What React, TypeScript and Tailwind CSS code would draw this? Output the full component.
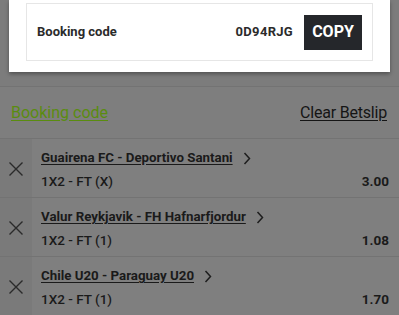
import React from "react";

const rows = [
  { match: "Guairena FC - Deportivo Santani", market: "1X2 - FT (X)", odds: "3.00" },
  { match: "Valur Reykjavik - FH Hafnarfjordur", market: "1X2 - FT (1)", odds: "1.08" },
  { match: "Chile U20 - Paraguay U20", market: "1X2 - FT (1)", odds: "1.70" },
];

function XIcon() {
  return (
    <svg width="16" height="16" viewBox="0 0 16 16" fill="none" stroke="#2a2a2a" strokeWidth="1.4">
      <path d="M1.5 1.5 L14.5 14.5 M14.5 1.5 L1.5 14.5" />
    </svg>
  );
}

function Chevron() {
  return (
    <svg width="8" height="13" viewBox="0 0 8 13" fill="none" stroke="#1e1e1e" strokeWidth="1.5">
      <path d="M1.5 1 L6.5 6.5 L1.5 12" />
    </svg>
  );
}

export default function App() {
  return (
    <div
      className="w-[399px] h-[315px] overflow-hidden bg-[#7c7c7c] flex flex-col"
      style={{ fontFamily: "Roboto, 'Liberation Sans', sans-serif" }}
    >
      <div className="mx-[9px] bg-white pt-[3px] pb-[11px] px-[17px] shadow-[0_2px_4px_rgba(0,0,0,0.35)]">
        <div className="h-[58px] border border-[#e6e6e6] flex items-center pl-[10px] pr-[10px]">
          <span className="text-[13px] font-bold text-[#2b2b2b]">Booking code</span>
          <span className="ml-auto text-[13px] font-bold text-[#2b2b2b] tracking-[0.3px]">0D94RJG</span>
          <button className="ml-[11px] w-[58px] h-[35px] bg-[#25272b] text-white text-[16px] font-bold flex items-center justify-center">
            COPY
          </button>
        </div>
      </div>
      <div className="mt-[14px] border-t border-[#737373] h-[54px] flex items-center justify-between pl-[11px] pr-[12px] bg-[#7e7e7e]">
        <span className="text-[16px] text-[#5a8c10] underline underline-offset-[2px]">Booking code</span>
        <span className="text-[16px] text-[#151515] underline underline-offset-[2px] tracking-[-0.2px]">Clear Betslip</span>
      </div>
      {rows.map((r) => (
        <div key={r.match} className="h-[59px] shrink-0 flex border-t border-[#737373]">
          <div className="w-[32px] bg-[#7a7a7a] flex items-center justify-center pt-[2px]">
            <XIcon />
          </div>
          <div className="flex-1 bg-[#7f7f7f] pl-[9px] pr-[10px] pt-[10px]">
            <div className="flex items-center h-[18px]">
              <span className="text-[13.3px] font-bold text-[#1a1a1a] underline underline-offset-[2px]">{r.match}</span>
              <span className="ml-[10px] flex items-center"><Chevron /></span>
            </div>
            <div className="flex items-center justify-between mt-[5px] h-[18px]">
              <span className="text-[13.5px] font-medium text-[#1a1a1a]">{r.market}</span>
              <span className="text-[13.5px] font-bold text-[#1a1a1a]">{r.odds}</span>
            </div>
          </div>
        </div>
      ))}
    </div>
  );
}
